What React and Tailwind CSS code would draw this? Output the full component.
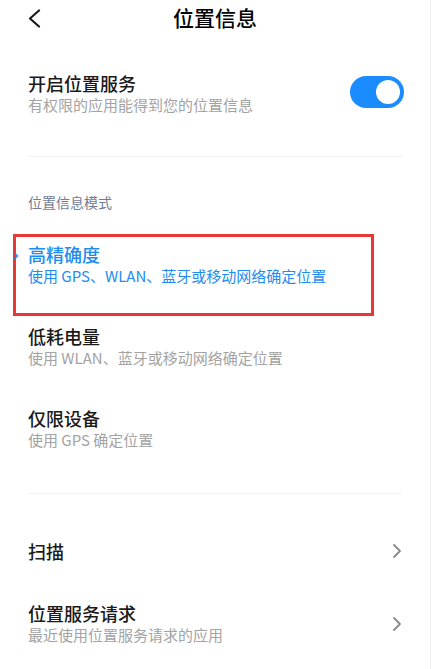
const font = { fontFamily: '"Noto Sans CJK SC", "Noto Sans", sans-serif' };

function Chevron() {
  return (
    <svg width="10" height="16" viewBox="0 0 10 16" className="shrink-0">
      <polyline points="2,2 8,8 2,14" fill="none" stroke="#8a8a8a" strokeWidth="1.8" strokeLinecap="round" strokeLinejoin="round" />
    </svg>
  );
}

function ModeRow({ title, desc, active }) {
  return (
    <div className="relative px-7 py-[19px]">
      {active && (
        <>
          <div className="absolute left-[13px] top-[10px] w-[361px] h-[82px] border-[3px] border-[#e53935]" />
          <svg width="6" height="8" viewBox="0 0 6 8" className="absolute left-[13px] top-[28px]">
            <polyline points="1.5,1 4.5,4 1.5,7" fill="none" stroke="#1e8cf0" strokeWidth="1.4" />
          </svg>
        </>
      )}
      <div className={`text-[18px] leading-[22px] font-medium ${active ? "text-[#1e8cf0]" : "text-[#1a1a1a]"}`}>{title}</div>
      <div className={`text-[15px] leading-[22px] ${active ? "text-[#1e8cf0]" : "text-[#a3a3a3]"}`}>{desc}</div>
    </div>
  );
}

export default function App() {
  return (
    <div style={font} className="w-[435px] h-[669px] bg-white overflow-hidden">
      <div className="w-[431px] h-full border-r border-[#f0f0f0]">
        <header className="relative h-9 flex items-center justify-center">
          <svg width="14" height="20" viewBox="0 0 14 20" className="absolute left-[27px] top-[9px]">
            <polyline points="12,1.5 3,9.5 12,17.5" fill="none" stroke="#1a1a1a" strokeWidth="2.2" strokeLinecap="round" strokeLinejoin="round" />
          </svg>
          <h1 className="text-[21px] font-medium text-black">位置信息</h1>
        </header>

        <div className="mt-9 px-7 flex items-center justify-between">
          <div>
            <div className="text-[18px] leading-[22px] font-medium text-[#1a1a1a]">开启位置服务</div>
            <div className="text-[15px] leading-[22px] text-[#a3a3a3]">有权限的应用能得到您的位置信息</div>
          </div>
          <div className="w-[54px] h-8 rounded-full bg-[#1a8cff] flex items-center justify-end pr-1 mr-[-2px] -mt-1">
            <div className="w-6 h-6 rounded-full bg-white" />
          </div>
        </div>

        <div className="mx-7 mt-10 h-px bg-[#f0f0f0]" />

        <div className="px-7 mt-[35px] text-[14px] leading-5 text-[#6f7c96]">位置信息模式</div>

        <div className="mt-3">
          <ModeRow title="高精确度" desc="使用 GPS、WLAN、蓝牙或移动网络确定位置" active />
          <ModeRow title="低耗电量" desc="使用 WLAN、蓝牙或移动网络确定位置" />
          <ModeRow title="仅限设备" desc="使用 GPS 确定位置" />
        </div>

        <div className="mx-7 mt-[23px] h-px bg-[#f3f3f3]" />

        <div className="mt-[26px] px-7 h-[62px] flex items-center justify-between">
          <div className="text-[18px] leading-[22px] font-medium text-[#1a1a1a]">扫描</div>
          <Chevron />
        </div>

        <div className="px-7 py-5 flex items-center justify-between">
          <div>
            <div className="text-[18px] leading-[22px] font-medium text-[#1a1a1a]">位置服务请求</div>
            <div className="text-[15px] leading-[22px] text-[#a3a3a3]">最近使用位置服务请求的应用</div>
          </div>
          <Chevron />
        </div>
      </div>
    </div>
  );
}
